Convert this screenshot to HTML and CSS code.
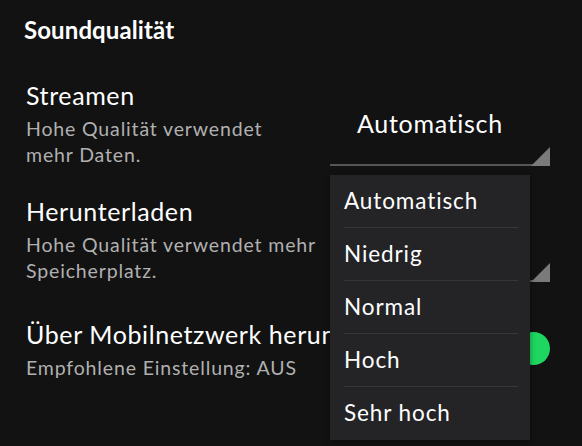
FILE: index.html
```html
<!DOCTYPE html>
<html lang="de">
<head>
<meta charset="utf-8">
<title>Soundqualität</title>
<link rel="stylesheet" href="styles.css">
</head>
<body>
<main class="page">
  <h1 class="section-title">Soundqualität</h1>

  <div class="row">
    <div class="row-text narrow">
      <div class="row-title">Streamen</div>
      <div class="row-sub">Hohe Qualität verwendet mehr Daten.</div>
    </div>
    <div class="select">Automatisch</div>
  </div>

  <div class="row">
    <div class="row-text">
      <div class="row-title">Herunterladen</div>
      <div class="row-sub">Hohe Qualität verwendet mehr Speicherplatz.</div>
    </div>
    <div class="select">Automatisch</div>
  </div>

  <div class="row row-toggle">
    <div class="row-text">
      <div class="row-title nowrap">Über Mobilnetzwerk herunterladen</div>
      <div class="row-sub">Empfohlene Einstellung: AUS</div>
    </div>
    <div class="toggle"><span class="thumb"></span></div>
  </div>

  <ul class="menu">
    <li class="menu-item">Automatisch</li>
    <li class="menu-item">Niedrig</li>
    <li class="menu-item">Normal</li>
    <li class="menu-item">Hoch</li>
    <li class="menu-item">Sehr hoch</li>
  </ul>
</main>
</body>
</html>
```

FILE: styles.css
```css
* { box-sizing: border-box; }

html, body {
  margin: 0;
  padding: 0;
  background: #121212;
}

body {
  width: 582px;
  height: 446px;
  overflow: hidden;
  font-family: Lato, "Noto Sans", sans-serif;
  color: #ffffff;
}

.page {
  position: relative;
  height: 446px;
  padding: 15px 32px 0 26px;
  display: flex;
  flex-direction: column;
}

.section-title {
  margin: 0 0 35px -2px;
  font-size: 24px;
  line-height: 30px;
  font-weight: 700;
  letter-spacing: 0.1px;
}

.row {
  display: flex;
  justify-content: space-between;
  margin-bottom: 28px;
}

.row-toggle {
  margin-top: 7px;
}

.row-text {
  flex: 1;
  min-width: 0;
  display: flex;
  flex-direction: column;
  gap: 6px;
}

.row-text.narrow .row-sub {
  max-width: 270px;
}

.row-title {
  font-size: 25px;
  line-height: 30px;
  letter-spacing: 0.6px;
}

.nowrap {
  white-space: nowrap;
}

.row-sub {
  font-size: 19.5px;
  line-height: 26px;
  letter-spacing: 0.85px;
  color: #b0b0b0;
}

.select {
  position: relative;
  flex: 0 0 220px;
  align-self: flex-end;
  margin-bottom: 2px;
  padding: 0 0 26px 27px;
  font-size: 25px;
  line-height: 30px;
  letter-spacing: 0.7px;
  border-bottom: 2px solid #565656;
}

.select::after {
  content: "";
  position: absolute;
  right: 0;
  bottom: -2px;
  width: 19px;
  height: 19px;
  background: #7a7a7a;
  clip-path: polygon(100% 0, 100% 100%, 0 100%);
}

.toggle {
  position: relative;
  flex: 0 0 52px;
  height: 33px;
  align-self: center;
  margin-top: -4px;
  display: flex;
  align-items: center;
  justify-content: flex-end;
}

.toggle::before {
  content: "";
  position: absolute;
  left: 0;
  right: 8px;
  height: 18px;
  border-radius: 9px;
  background: #169c46;
}

.thumb {
  position: relative;
  width: 33px;
  height: 33px;
  border-radius: 50%;
  background: #1ed760;
}

.menu {
  position: absolute;
  left: 330px;
  top: 175px;
  width: 200px;
  height: 265px;
  margin: 0;
  padding: 0;
  list-style: none;
  background: #242427;
  box-shadow: 0 2px 6px rgba(0, 0, 0, 0.4);
}

.menu-item {
  position: relative;
  height: 53px;
  padding-left: 14px;
  font-size: 22.5px;
  line-height: 52px;
  letter-spacing: 0.9px;
  color: #ffffff;
}

.menu-item::after {
  content: "";
  position: absolute;
  left: 14px;
  right: 12px;
  bottom: 0;
  height: 1px;
  background: #36363a;
}

.menu-item:last-child::after {
  display: none;
}
```
